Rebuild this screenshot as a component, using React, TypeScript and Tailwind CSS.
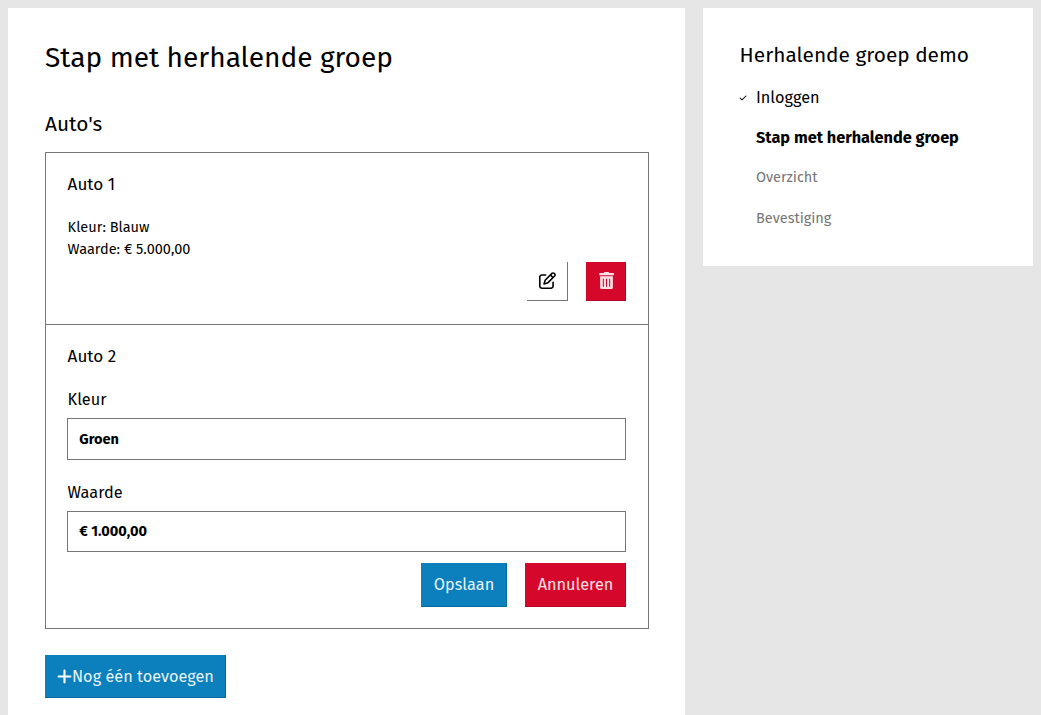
import { FaCheck, FaPlus, FaRegPenToSquare } from 'react-icons/fa6';
import { FaTrashAlt } from 'react-icons/fa';

function Field({ label, value, className }: { label: string; value: string; className: string }) {
  return (
    <label className="block">
      <span className="flex h-[30px] items-center pb-[5px] pl-[0.6px] text-[16.3px]">{label}</span>
      <span className={`flex items-center border border-[#767676] pl-[11.3px] text-[14.5px] font-bold ${className}`}>{value}</span>
    </label>
  );
}

export default function App() {
  return (
    <div className="flex h-[715px] items-start gap-[18px] overflow-hidden bg-[#e6e6e6] pt-2 pl-2 font-['Fira_Sans','Noto_Sans',sans-serif] whitespace-nowrap text-black">
      <main className="h-[707px] w-[677px] bg-white pt-[30px] pr-9 pl-[37px]">
        <h1 className="h-10 text-[28.08px] leading-10">Stap met herhalende groep</h1>
        <h2 className="mt-[32px] h-[30px] text-[20.8px] leading-[30px]">Auto's</h2>
        <div className="mt-[12px] h-[477px] border border-[#767676]">
          <section className="h-[172px] border-b border-[#767676] px-[21px] pt-[20px]">
            <h3 className="h-6 pl-[0.6px] text-[17.1px] leading-6">Auto 1</h3>
            <div className="mt-[19px] pl-[0.6px] text-[14.5px] leading-[22px]">
              <p>Kleur: Blauw</p>
              <p>Waarde: € 5.000,00</p>
            </div>
            <div className="mt-[2px] flex justify-end gap-[18px] pr-px">
              <button aria-label="Bewerken" className="flex h-[39px] w-[41px] items-center justify-center border-r border-b border-[#767676] pb-px pl-px">
                <FaRegPenToSquare size={17} />
              </button>
              <button aria-label="Verwijderen" className="flex h-[39px] w-10 items-center justify-center border-r border-b border-[#b10723] bg-[#d5072a] pb-px pl-px text-[#fbe1e5]">
                <FaTrashAlt size={17} />
              </button>
            </div>
          </section>
          <section className="px-[21px] pt-[20px]">
            <h3 className="h-6 pl-[0.6px] text-[17.1px] leading-6">Auto 2</h3>
            <div className="mt-[19px] pr-px">
              <Field label="Kleur" value="Groen" className="h-[42px] pt-px" />
              <div className="mt-[21px]">
                <Field label="Waarde" value="€ 1.000,00" className="h-[41px]" />
              </div>
              <div className="mt-[11px] flex justify-end gap-[18px] text-[16.3px]">
                <button className="flex h-11 w-[86px] items-center justify-center border-r border-b border-[#076a9d] bg-[#0b80bc] pt-px pl-px text-[#e7f2f8]">Opslaan</button>
                <button className="flex h-11 w-[101px] items-center justify-center border-r border-b border-[#b10723] bg-[#d5072a] pt-px pl-px text-[#fbe1e5]">Annuleren</button>
              </div>
            </div>
          </section>
        </div>
        <button className="mt-[26px] flex h-[43px] w-[181px] items-center border-r border-b border-[#076a9d] bg-[#0b80bc] pl-[11px] text-[16.3px] text-[#e7f2f8]">
          <FaPlus size={17} className="mr-[-1px] shrink-0 text-white" />
          <span className="pt-[2px]">Nog één toevoegen</span>
        </button>
      </main>
      <aside className="h-[258px] w-[330px] bg-white pt-[33px] pl-[37px]">
        <h2 className="ml-[-0.4px] h-[30px] text-[20.85px] leading-[30px]">Herhalende groep demo</h2>
        <ul className="mt-[7px]">
          <li className="flex h-10 items-center text-[16.3px]"><FaCheck size={8} className="mr-[9px] ml-[-1px]" />Inloggen</li>
          <li className="flex h-10 items-center pl-4 text-[16.3px] font-bold">Stap met herhalende groep</li>
          <li className="flex h-10 items-center pl-4 text-[14.5px] text-[#767676]">Overzicht</li>
          <li className="flex h-[41px] items-center pl-4 text-[14.5px] text-[#767676]">Bevestiging</li>
        </ul>
      </aside>
    </div>
  );
}
